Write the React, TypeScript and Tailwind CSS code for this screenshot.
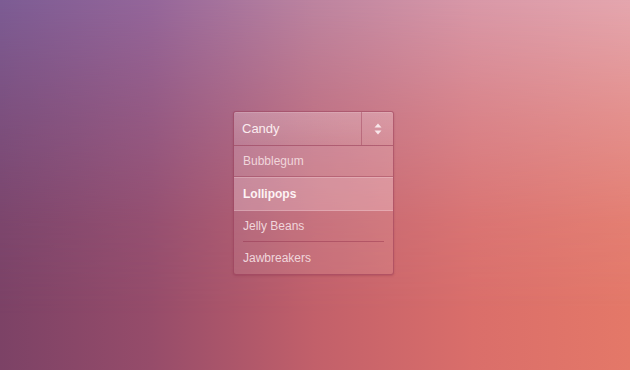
import React from "react";

export default function App() {
  const font = { fontFamily: '"Liberation Sans", Arial, sans-serif' };
  return (
    <div
      className="relative w-[630px] h-[370px] overflow-hidden flex justify-start items-start pl-[233px] pt-[111px] bg-[linear-gradient(90deg,#7c4266_0%,#964c6a_24%,#c2606a_50%,#da6e6a_75%,#e47868_100%)] before:content-[''] before:absolute before:inset-0 before:bg-[linear-gradient(90deg,#7c5c94_0%,#94669a_24%,#bc84a0_50%,#d898a8_75%,#e4a6ae_100%)] before:[mask-image:linear-gradient(180deg,#000_0%,rgba(0,0,0,0.55)_30%,rgba(0,0,0,0.15)_60%,transparent_85%)]"
      style={font}
    >
      <div className="relative z-10 w-[161px] rounded-[3px] border border-[rgba(140,40,70,0.45)] bg-[rgba(255,235,240,0.1)] shadow-[0_1px_2px_rgba(120,30,60,0.25),inset_0_1px_0_rgba(255,255,255,0.15)] overflow-hidden">
        <div className="h-[34px] flex border-b border-[rgba(140,40,70,0.5)] bg-[linear-gradient(180deg,rgba(255,235,240,0.2),rgba(255,235,240,0.1))]">
          <div className="flex-1 flex items-center pl-[8px] text-[13px] text-[#fbecef]">Candy</div>
          <div className="w-[32px] border-l border-[rgba(140,40,70,0.35)] flex items-center justify-center">
            <svg width="8" height="12" viewBox="0 0 8 12">
              <path d="M4 0.5 L7.5 4.5 L0.5 4.5 Z" fill="#f8e6ea" />
              <path d="M4 11.5 L7.5 7.5 L0.5 7.5 Z" fill="#f8e6ea" />
            </svg>
          </div>
        </div>
        <div className="h-[31px] flex items-center pl-[9px] text-[12px] text-[#f0d6db] bg-[rgba(255,225,232,0.12)] border-b border-[rgba(140,40,70,0.35)]">
          Bubblegum
        </div>
        <div className="h-[34px] flex items-center pl-[9px] text-[12px] font-bold text-[#fdf3f5] bg-[rgba(255,225,232,0.25)] border-t border-[rgba(255,235,240,0.25)] border-b border-[rgba(140,40,70,0.45)]">
          Lollipops
        </div>
        <div className="px-[9px]">
          <div className="h-[31px] flex items-center text-[12px] text-[#f0d6db] border-b border-[rgba(140,40,70,0.4)]">
            Jelly Beans
          </div>
        </div>
        <div className="h-[32px] flex items-center pl-[9px] text-[12px] text-[#f0d6db]">
          Jawbreakers
        </div>
      </div>
    </div>
  );
}
